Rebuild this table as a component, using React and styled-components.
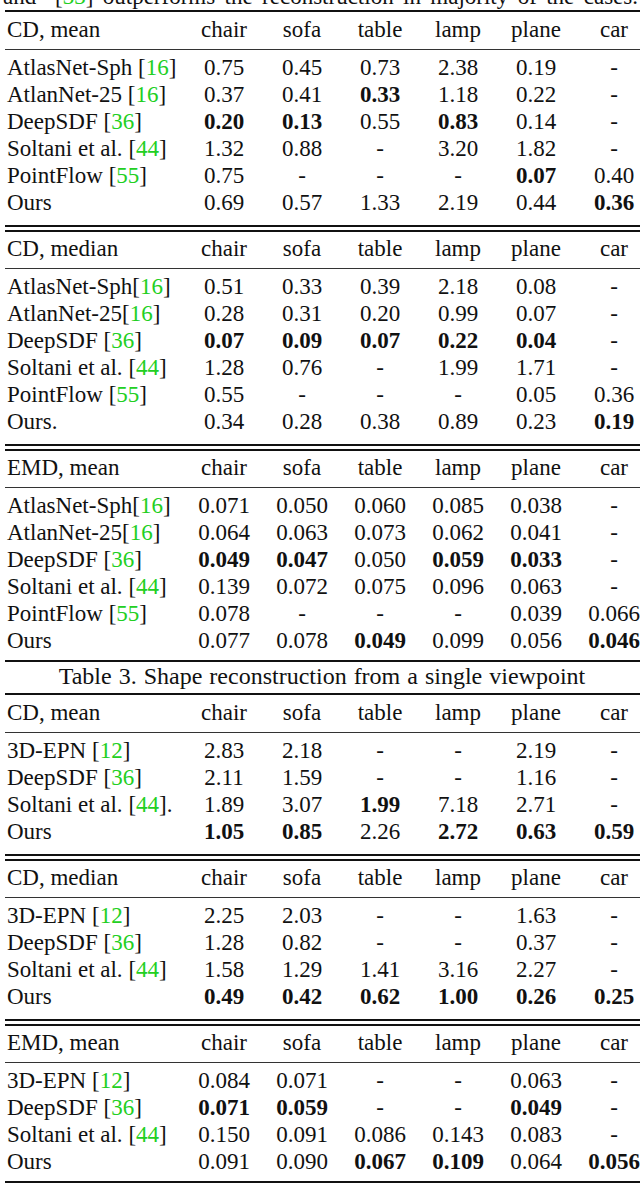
import React from "react";
import styled, { createGlobalStyle, css } from "styled-components";

const GlobalStyle = createGlobalStyle`
  html, body {
    margin: 0;
    padding: 0;
    background: #ffffff;
    overflow: hidden;
  }
  body {
    font-family: "Liberation Serif", "Times New Roman", serif;
    color: #111111;
  }
`;

const Page = styled.div`
  width: 640px;
  height: 1186px;
  overflow: hidden;
  background: #ffffff;
  font-size: 23px;
  line-height: 27px;
`;

const Lead = styled.p`
  margin: -17px 0 0 0;
  padding: 0 2px 0 3px;
  white-space: nowrap;
  text-align: justify;
  text-align-last: justify;
`;

const Cite = styled.span`
  color: #22cf22;
`;

const Table = styled.div`
  margin-left: 5px;
  width: 640px;
`;

const Rule = styled.div`
  box-sizing: content-box;
  ${({ $kind }) =>
    $kind === "thick"
      ? css`
          height: 2px;
          background: #111;
        `
      : $kind === "double"
      ? css`
          height: 3px;
          border-top: 2px solid #111;
          border-bottom: 2px solid #111;
        `
      : css`
          height: 1px;
          background: #333;
        `}
`;

const Grid = styled.div`
  display: grid;
  grid-template-columns: 180px repeat(6, 78px);
  align-items: center;
  height: 27px;
`;

const HeaderRow = styled(Grid)`
  padding: ${({ $top }) => $top}px 0 5.5px 0;
`;

const Body = styled.div`
  padding: 4.5px 0 ${({ $end }) => ($end ? 5.5 : 8.5)}px 0;
`;

const Label = styled.div`
  padding-left: 2px;
  white-space: nowrap;
`;

const Cell = styled.div`
  text-align: center;
  white-space: nowrap;
  font-weight: ${({ $bold }) => ($bold ? 700 : 400)};
`;

const Caption = styled.div`
  text-align: center;
  padding: 1.5px 0 3px 4px;
  white-space: nowrap;
  font-size: 24px;
  word-spacing: 1px;
`;

const COLS = ["chair", "sofa", "table", "lamp", "plane", "car"];

const table2 = [
  {
    title: "CD, mean",
    rows: [
      ["AtlasNet-Sph [16]", "0.75 0.45 0.73 2.38 0.19 -"],
      ["AtlanNet-25 [16]", "0.37 0.41 *0.33 1.18 0.22 -"],
      ["DeepSDF [36]", "*0.20 *0.13 0.55 *0.83 0.14 -"],
      ["Soltani et al. [44]", "1.32 0.88 - 3.20 1.82 -"],
      ["PointFlow [55]", "0.75 - - - *0.07 0.40"],
      ["Ours", "0.69 0.57 1.33 2.19 0.44 *0.36"],
    ],
  },
  {
    title: "CD, median",
    rows: [
      ["AtlasNet-Sph[16]", "0.51 0.33 0.39 2.18 0.08 -"],
      ["AtlanNet-25[16]", "0.28 0.31 0.20 0.99 0.07 -"],
      ["DeepSDF [36]", "*0.07 *0.09 *0.07 *0.22 *0.04 -"],
      ["Soltani et al. [44]", "1.28 0.76 - 1.99 1.71 -"],
      ["PointFlow [55]", "0.55 - - - 0.05 0.36"],
      ["Ours.", "0.34 0.28 0.38 0.89 0.23 *0.19"],
    ],
  },
  {
    title: "EMD, mean",
    rows: [
      ["AtlasNet-Sph[16]", "0.071 0.050 0.060 0.085 0.038 -"],
      ["AtlanNet-25[16]", "0.064 0.063 0.073 0.062 0.041 -"],
      ["DeepSDF [36]", "*0.049 *0.047 0.050 *0.059 *0.033 -"],
      ["Soltani et al. [44]", "0.139 0.072 0.075 0.096 0.063 -"],
      ["PointFlow [55]", "0.078 - - - 0.039 0.066"],
      ["Ours", "0.077 0.078 *0.049 0.099 0.056 *0.046"],
    ],
  },
];

const table3 = [
  {
    title: "CD, mean",
    rows: [
      ["3D-EPN [12]", "2.83 2.18 - - 2.19 -"],
      ["DeepSDF [36]", "2.11 1.59 - - 1.16 -"],
      ["Soltani et al. [44].", "1.89 3.07 *1.99 7.18 2.71 -"],
      ["Ours", "*1.05 *0.85 2.26 *2.72 *0.63 *0.59"],
    ],
  },
  {
    title: "CD, median",
    rows: [
      ["3D-EPN [12]", "2.25 2.03 - - 1.63 -"],
      ["DeepSDF [36]", "1.28 0.82 - - 0.37 -"],
      ["Soltani et al. [44]", "1.58 1.29 1.41 3.16 2.27 -"],
      ["Ours", "*0.49 *0.42 *0.62 *1.00 *0.26 *0.25"],
    ],
  },
  {
    title: "EMD, mean",
    rows: [
      ["3D-EPN [12]", "0.084 0.071 - - 0.063 -"],
      ["DeepSDF [36]", "*0.071 *0.059 - - *0.049 -"],
      ["Soltani et al. [44]", "0.150 0.091 0.086 0.143 0.083 -"],
      ["Ours", "0.091 0.090 *0.067 *0.109 0.064 *0.056"],
    ],
  },
];

function LabelText({ text }) {
  const m = text.match(/^(.*)\[(\d+)\](.*)$/);
  if (!m) return <Label>{text}</Label>;
  return (
    <Label>
      {m[1]}[<Cite>{m[2]}</Cite>]{m[3]}
    </Label>
  );
}

function DataRow({ label, values }) {
  return (
    <Grid>
      <LabelText text={label} />
      {values.split(" ").map((v, i) => (
        <Cell key={i} $bold={v.startsWith("*")}>
          {v.replace("*", "")}
        </Cell>
      ))}
    </Grid>
  );
}

function ResultTable({ blocks, headTop }) {
  return (
    <Table>
      <Rule $kind="thick" />
      {blocks.map((b, i) => (
        <React.Fragment key={b.title + i}>
          {i > 0 && <Rule $kind="double" />}
          <HeaderRow $top={i === 0 ? headTop : 3.5}>
            <Label>{b.title}</Label>
            {COLS.map((c) => (
              <Cell key={c}>{c}</Cell>
            ))}
          </HeaderRow>
          <Rule $kind="thin" />
          <Body $end={i === blocks.length - 1}>
            {b.rows.map(([label, values]) => (
              <DataRow key={label} label={label} values={values} />
            ))}
          </Body>
        </React.Fragment>
      ))}
      <Rule $kind="thick" />
    </Table>
  );
}

export default function App() {
  return (
    <Page>
      <GlobalStyle />
      <Lead>
        and&nbsp; [<Cite>33</Cite>] outperforms the reconstruction in majority of the cases.
      </Lead>
      <ResultTable blocks={table2} headTop={4} />
      <Caption>Table 3. Shape reconstruction from a single viewpoint</Caption>
      <ResultTable blocks={table3} headTop={4} />
    </Page>
  );
}
